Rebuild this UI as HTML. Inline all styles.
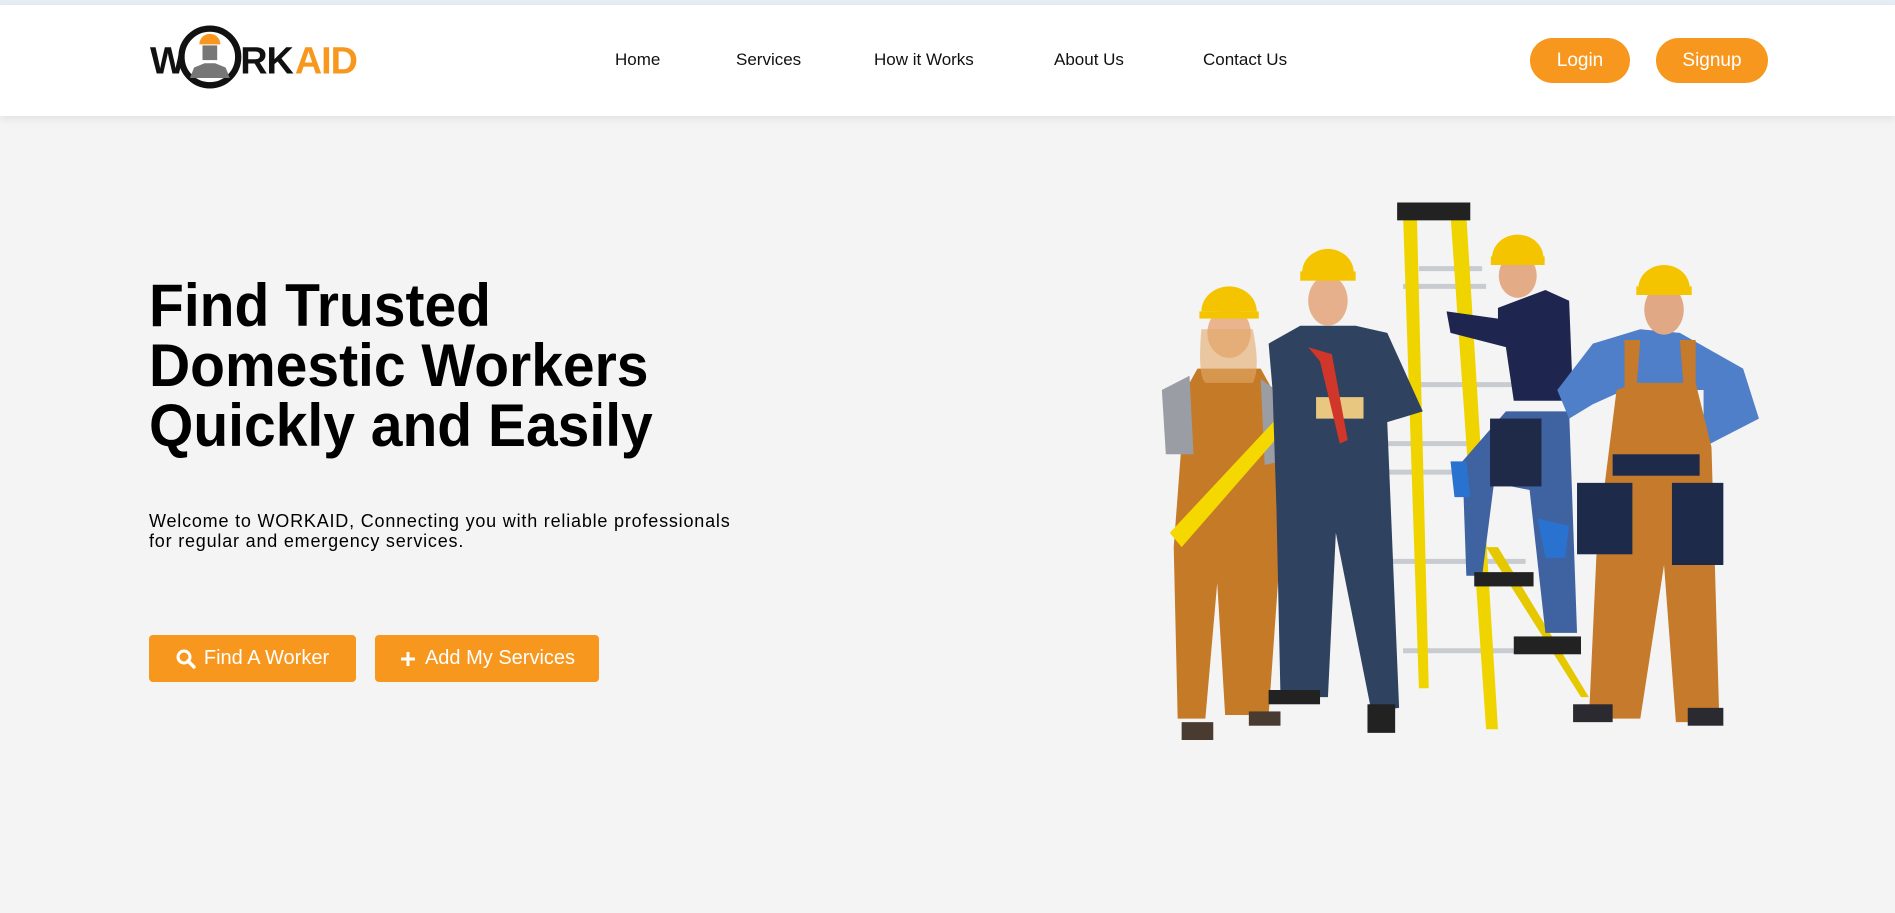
<!DOCTYPE html>
<html><head><meta charset="utf-8"><style>
*{margin:0;padding:0;box-sizing:border-box}
body{width:1895px;height:913px;background:#f4f4f4;font-family:"Liberation Sans",sans-serif;position:relative;overflow:hidden;color:#000}
.top{position:absolute;left:0;top:0;width:1895px;height:5px;background:#e6edf4}
header{position:absolute;left:0;top:5px;width:1895px;height:111px;background:#fff;box-shadow:0 3px 8px rgba(0,0,0,.08)}
.nav a{position:absolute;top:45px;font-size:17px;color:#111;text-decoration:none}
.pill{position:absolute;top:33px;height:45px;border-radius:23px;background:#f7971e;color:#fff;font-size:19px;display:flex;align-items:center;justify-content:center}
h1{position:absolute;left:149px;top:276px;font-size:60px;line-height:60px;font-weight:bold;transform:scaleX(.95);transform-origin:left top;white-space:nowrap}
p.sub{position:absolute;left:149px;top:511px;font-size:18px;line-height:20px;width:760px;letter-spacing:0.8px}
.btn{position:absolute;top:635px;height:47px;border-radius:4px;background:#f7971e;color:#fff;font-size:20px;display:flex;align-items:center;justify-content:center;gap:8px}
</style></head><body>
<div class="top"></div>
<header>
<svg style="position:absolute;left:150px;top:20px" width="210" height="66" viewBox="0 0 200 62">
<text x="0" y="46" font-family="Liberation Sans" font-weight="bold" font-size="36" fill="#111" letter-spacing="-1">W</text>
<circle cx="57" cy="30" r="27" fill="none" stroke="#111" stroke-width="6"/>
<path d="M47 18 a10 10 0 0 1 20 0 z" fill="#f7971e"/>
<rect x="50" y="19" width="14" height="14" fill="#777"/>
<path d="M38 50 L42 40 L52 36 L62 36 L72 40 L76 50 Z" fill="#777"/>
<text x="86" y="46" font-family="Liberation Sans" font-weight="bold" font-size="36" fill="#111" letter-spacing="-1">RK</text>
<text x="138" y="46" font-family="Liberation Sans" font-weight="bold" font-size="36" fill="#f7971e" letter-spacing="-1">AID</text>
</svg>
<div class="nav">
<a style="left:615px">Home</a><a style="left:736px">Services</a><a style="left:874px">How it Works</a><a style="left:1054px">About Us</a><a style="left:1203px">Contact Us</a>
</div>
<div class="pill" style="left:1530px;width:100px">Login</div>
<div class="pill" style="left:1656px;width:112px">Signup</div>
</header>
<h1>Find Trusted<br>Domestic Workers<br>Quickly and Easily</h1>
<p class="sub">Welcome to WORKAID, Connecting you with reliable professionals<br>for regular and emergency services.</p>
<div class="btn" style="left:149px;width:207px"><svg width="20" height="20" viewBox="0 0 20 20"><circle cx="8" cy="8" r="6" fill="none" stroke="#fff" stroke-width="3"/><path d="M12 12 L18 18" stroke="#fff" stroke-width="3.5" stroke-linecap="round"/></svg>Find A Worker</div>
<div class="btn" style="left:375px;width:224px"><svg width="18" height="18" viewBox="0 0 18 18"><path d="M9 2V16M2 9H16" stroke="#fff" stroke-width="3"/></svg>Add My Services</div>
<svg style="position:absolute;left:1150px;top:190px" width="620" height="560" viewBox="0 0 1568 1568" preserveAspectRatio="none">
<g stroke="#c8ccd0" stroke-width="14"><path d="M680 220H840M640 270H850M660 545H920M600 710H920M590 790H930M600 1040H950M640 1290H1090"/></g>
<path d="M640 70L675 70L705 1395L680 1395Z" fill="#f0d400"/>
<path d="M760 70L800 70L880 1510L850 1510Z" fill="#f0d400"/>
<path d="M850 1000L880 1000L1110 1420L1090 1420Z" fill="#e6c800"/>
<rect x="625" y="35" width="185" height="50" fill="#222"/>
<path d="M90 560L120 500L280 500L310 560L330 1000L300 1470L190 1470L170 1100L140 1480L70 1480L60 1000Z" fill="#c57a28"/>
<path d="M30 560L100 520L110 740L40 740Z" fill="#9a9ea4"/>
<path d="M280 530L320 560L330 760L290 770Z" fill="#9a9ea4"/>
<ellipse cx="200" cy="400" rx="55" ry="70" fill="#e9b48e"/>
<path d="M130 390Q120 520 140 540L260 540Q280 500 260 390Z" fill="#e3a868" opacity=".6"/>
<path d="M130 340a70 70 0 0 1 140 0z" fill="#f5c400"/><rect x="125" y="340" width="150" height="20" fill="#f5c400"/>
<path d="M50 960L320 640L340 670L80 1000Z" fill="#f5d800"/>
<rect x="80" y="1490" width="80" height="50" fill="#4a3b30"/><rect x="250" y="1460" width="80" height="40" fill="#4a3b30"/>
<path d="M300 430L380 380L520 380L600 400L690 620L600 650L630 1450L560 1460L470 960L450 1420L330 1420L320 900L310 560Z" fill="#2f4260"/>
<ellipse cx="450" cy="310" rx="50" ry="70" fill="#e7b08c"/>
<path d="M385 230a65 65 0 0 1 130 0z" fill="#f5c400"/><rect x="380" y="228" width="140" height="26" fill="#f5c400"/>
<path d="M420 580L540 580L540 640L420 640Z" fill="#e8c880"/>
<path d="M400 440L460 460L500 700L480 710L430 480Z" fill="#d0362a"/>
<rect x="300" y="1400" width="130" height="40" fill="#222"/><rect x="550" y="1440" width="70" height="80" fill="#222"/>
<path d="M880 330L1000 280L1060 310L1070 590L920 590L900 440L760 400L750 340L880 360Z" fill="#1e2650"/>
<path d="M790 760L900 620L1060 620L1080 1240L1000 1240L960 840L870 820L840 1080L800 1080Z" fill="#3f62a0"/>
<rect x="860" y="640" width="130" height="190" fill="#1e2a48"/>
<ellipse cx="930" cy="240" rx="48" ry="62" fill="#e3ac86"/>
<path d="M865 190a65 65 0 0 1 130 0z" fill="#f5c400"/><rect x="862" y="186" width="136" height="24" fill="#f5c400"/>
<path d="M760 760L800 760L810 860L770 860Z" fill="#2a72d0"/><path d="M980 920L1060 940L1050 1030L1000 1030Z" fill="#2a72d0"/>
<rect x="820" y="1070" width="150" height="40" fill="#222"/><rect x="920" y="1250" width="170" height="50" fill="#222"/>
<path d="M1030 560L1120 430L1240 390L1340 400L1500 500L1540 640L1400 720L1400 560L1200 560L1120 600L1060 640Z" fill="#4f7fc8"/>
<path d="M1180 560L1230 540L1380 540L1420 720L1440 1490L1330 1490L1300 1050L1240 1480L1110 1480L1130 1000Z" fill="#c67a2b"/>
<path d="M1200 420L1240 420L1230 560L1200 560ZM1340 420L1380 420L1380 560L1350 560Z" fill="#c67a2b"/>
<rect x="1080" y="820" width="140" height="200" fill="#1e2a4a"/><rect x="1320" y="820" width="130" height="230" fill="#1e2a4a"/>
<rect x="1170" y="740" width="220" height="60" fill="#1e2a4a"/>
<ellipse cx="1300" cy="335" rx="50" ry="70" fill="#e0a884"/>
<path d="M1235 275a65 65 0 0 1 130 0z" fill="#f5c400"/><rect x="1230" y="270" width="140" height="24" fill="#f5c400"/>
<rect x="1070" y="1440" width="100" height="50" fill="#2a2a30"/><rect x="1360" y="1450" width="90" height="50" fill="#2a2a30"/>
</svg>
</body></html>
